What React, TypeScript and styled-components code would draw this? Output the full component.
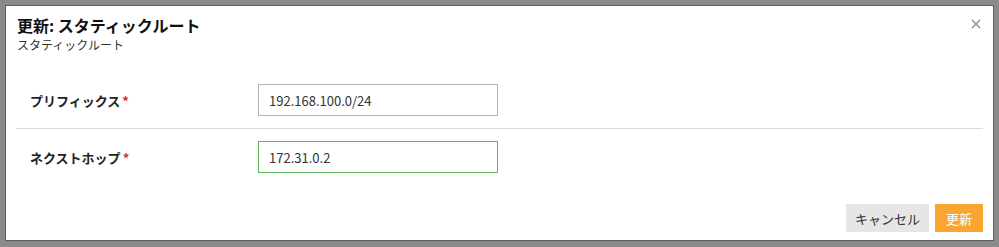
import React from 'react';
import styled, { createGlobalStyle } from 'styled-components';

const font = `"Noto Sans CJK JP", "Noto Sans", "Liberation Sans", sans-serif`;

const GlobalStyle = createGlobalStyle`
  html, body {
    margin: 0;
    padding: 0;
    background: #8a8a8a;
  }
  body {
    font-family: ${font};
    color: #222;
  }
`;

const Backdrop = styled.div`
  width: 999px;
  height: 247px;
  padding: 5px 0 0 5px;
  box-sizing: border-box;
`;

const Modal = styled.div`
  width: 989px;
  height: 236px;
  box-sizing: border-box;
  border: 1px solid #5e5e5e;
  background: #fff;
  position: relative;
  display: flex;
  flex-direction: column;
`;

const Header = styled.div`
  padding: 8px 11px 0;
  height: 66px;
  box-sizing: border-box;
`;

const Title = styled.h1`
  margin: 0;
  font-size: 16px;
  line-height: 22px;
  font-weight: 700;
  color: #111;
`;

const Subtitle = styled.div`
  font-size: 12px;
  line-height: 18px;
  color: #333;
`;

const Close = styled.button`
  position: absolute;
  top: 11px;
  right: 10px;
  width: 14px;
  height: 14px;
  padding: 0;
  border: none;
  background: none;
  color: #8a8a8a;
  display: flex;
  align-items: center;
  justify-content: center;
`;

const Body = styled.div`
  margin: 0 10px;
`;

const Row = styled.div<{ $divided?: boolean }>`
  display: flex;
  align-items: center;
  padding: 12px 0 12px 14px;
  border-bottom: ${(p) => (p.$divided ? '1px solid #dcdcdc' : 'none')};
`;

const Label = styled.label`
  width: 228px;
  font-size: 13px;
  font-weight: 700;
  color: #222;
`;

const Required = styled.span`
  color: #e0262b;
  margin-left: 2px;
`;

const Input = styled.input<{ $valid?: boolean }>`
  width: 240px;
  height: 32px;
  box-sizing: border-box;
  padding: 0 10px;
  border: 1px solid ${(p) => (p.$valid ? '#5cb85c' : '#b3b3b3')};
  font-family: ${font};
  font-size: 13px;
  color: #333;
  outline: none;
`;

const Footer = styled.div`
  margin-top: auto;
  display: flex;
  justify-content: flex-end;
  gap: 6px;
  padding: 0 10px 8px;
`;

const Button = styled.button<{ $primary?: boolean }>`
  height: 28px;
  padding: 0 ${(p) => (p.$primary ? '11px' : '9px')};
  border: none;
  font-family: ${font};
  font-size: 13px;
  background: ${(p) => (p.$primary ? '#f9a630' : '#e6e6e6')};
  color: ${(p) => (p.$primary ? '#fff' : '#333')};
`;

export default function App() {
  return (
    <>
      <GlobalStyle />
      <Backdrop>
        <Modal>
          <Header>
            <Title>更新: スタティックルート</Title>
            <Subtitle>スタティックルート</Subtitle>
          </Header>
          <Close aria-label="閉じる">
            <svg width="10" height="10" viewBox="0 0 10 10">
              <path d="M1 1 L9 9 M9 1 L1 9" stroke="currentColor" strokeWidth="1.4" />
            </svg>
          </Close>
          <Body>
            <Row $divided>
              <Label>
                プリフィックス<Required>*</Required>
              </Label>
              <Input defaultValue="192.168.100.0/24" />
            </Row>
            <Row>
              <Label>
                ネクストホップ<Required>*</Required>
              </Label>
              <Input $valid defaultValue="172.31.0.2" />
            </Row>
          </Body>
          <Footer>
            <Button>キャンセル</Button>
            <Button $primary>更新</Button>
          </Footer>
        </Modal>
      </Backdrop>
    </>
  );
}
